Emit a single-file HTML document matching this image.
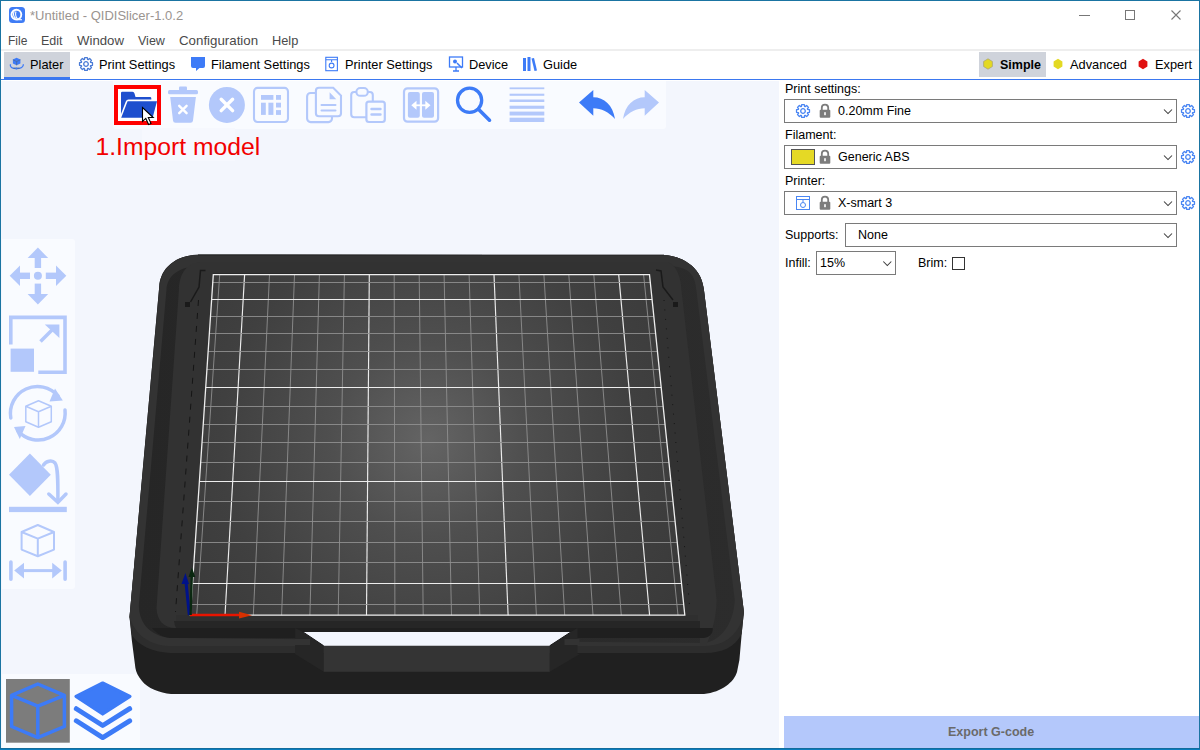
<!DOCTYPE html>
<html><head><meta charset="utf-8">
<style>
*{box-sizing:border-box}
html,body{margin:0;padding:0}
body{width:1200px;height:750px;position:relative;overflow:hidden;background:#fff;font-family:"Liberation Sans",sans-serif;font-size:12.5px;color:#000}
.a{position:absolute;white-space:nowrap}
.t{position:absolute;white-space:nowrap;line-height:1}
.combo{position:absolute;border:1px solid #7a7a7a;background:#fff}
.mn{stroke:#8e8e8e;stroke-width:0.9}
.mj{stroke:#ededed;stroke-width:1.15}
</style></head><body>
<!-- title bar -->
<div class="a" style="left:9px;top:7px;width:16px;height:16px;background:#3f7cf5;border-radius:3.5px"></div>
<svg class="a" style="left:9px;top:7px" width="16" height="16" viewBox="0 0 16 16"><circle cx="7.4" cy="7.6" r="4.9" fill="none" stroke="#fff" stroke-width="1.9"/><path d="M5.3,4.2 Q3.2,8 6.5,11.5 M7,4.5 Q5.6,8.5 8.5,12" stroke="#fff" stroke-width="1.1" fill="none"/><path d="M8,12.6 L13,12.8" stroke="#fff" stroke-width="1.1"/></svg>
<div class="t" style="left:30px;top:9px;color:#9a9490;font-size:13px">*Untitled - QIDISlicer-1.0.2</div>
<div class="a" style="left:1079px;top:15px;width:11px;height:1px;background:#777"></div>
<div class="a" style="left:1125px;top:10px;width:10px;height:10px;border:1px solid #777"></div>
<svg class="a" style="left:1171px;top:10px" width="10" height="10" viewBox="0 0 10 10"><path d="M0.5 0.5L9.5 9.5M9.5 0.5L0.5 9.5" stroke="#777" stroke-width="1.1"/></svg>
<!-- menu -->
<div class="t" style="left:8px;top:35px;color:#4a4a4a;font-size:12px">File</div>
<div class="t" style="left:41px;top:35px;color:#4a4a4a">Edit</div>
<div class="t" style="left:77px;top:34.4px;color:#4a4a4a;font-size:13.2px">Window</div>
<div class="t" style="left:138px;top:35px;color:#4a4a4a">View</div>
<div class="t" style="left:179px;top:34.4px;color:#4a4a4a;font-size:13.3px">Configuration</div>
<div class="t" style="left:272px;top:35px;color:#4a4a4a;font-size:12.8px">Help</div>
<div class="a" style="left:1px;top:49px;width:1198px;height:2px;background:#eeeeee"></div>
<!-- tabs -->
<div class="a" style="left:4px;top:52px;width:66px;height:25px;background:#cfd3db"></div>
<div class="a" style="left:4px;top:77px;width:66px;height:3px;background:#3b78f0"></div>
<div class="a" style="left:1px;top:79px;width:1198px;height:1px;background:#3b78f0"></div>
<div class="t" style="left:30px;top:59px;font-size:12.8px">Plater</div>
<div class="t" style="left:99px;top:59px;font-size:12.8px">Print Settings</div>
<div class="t" style="left:211px;top:59px;font-size:12.8px">Filament Settings</div>
<div class="t" style="left:345px;top:59px;font-size:12.8px">Printer Settings</div>
<div class="t" style="left:469px;top:59px;font-size:12.8px">Device</div>
<div class="t" style="left:543px;top:59px;font-size:12.8px">Guide</div>
<div class="a" style="left:979px;top:52px;width:67px;height:25px;background:#cfd3db"></div>
<div class="t" style="left:1000px;top:59px;font-size:12.5px;font-weight:bold">Simple</div>
<div class="t" style="left:1070px;top:59px;font-size:12.8px">Advanced</div>
<div class="t" style="left:1155px;top:59px;font-size:12.8px">Expert</div>
<svg class="a" style="left:0;top:0" width="1200" height="80" viewBox="0 0 1200 80">
 <!-- hexagons -->
 <polygon points="988,58.8 992.4,61.5 992.4,66.5 988,69.2 983.6,66.5 983.6,61.5" fill="#e3d923" stroke="#a8a070" stroke-width="0.7"/>
 <polygon points="1058,58.8 1062.4,61.5 1062.4,66.5 1058,69.2 1053.6,66.5 1053.6,61.5" fill="#e3d923"/>
 <polygon points="1143,58.8 1147.4,61.5 1147.4,66.5 1143,69.2 1138.6,66.5 1138.6,61.5" fill="#e01010"/>
</svg>
<!-- canvas -->
<div class="a" style="left:1px;top:81px;width:778px;height:667px;background:#f3f6fd"></div>
<svg class="a" style="left:0;top:0" width="1200" height="750" viewBox="0 0 1200 750">
 <defs>
  <radialGradient id="plate" cx="428" cy="440" r="320" gradientUnits="userSpaceOnUse">
   <stop offset="0" stop-color="#646464"/><stop offset="0.3" stop-color="#4f4f4f"/><stop offset="0.65" stop-color="#404040"/><stop offset="1" stop-color="#383838"/>
  </radialGradient>
  <linearGradient id="dband" x1="130" y1="0" x2="745" y2="0" gradientUnits="userSpaceOnUse"><stop offset="0" stop-color="#262626"/><stop offset="1" stop-color="#2c2c2c"/></linearGradient>
 </defs>
 <!-- toolbar bgs -->
 <path d="M113,81 H666 V126 Q666,129 663,129 H116 Q113,129 113,126 Z" fill="#f9fbff"/>
 <path d="M2,239 H72 Q75,239 75,242 V586 Q75,589 72,589 H2 Z" fill="#f9fbff"/>
 <path d="M2,674 H137 Q140,674 140,677 V748 H2 Z" fill="#f9fbff"/>
 <rect x="142" y="128" width="93" height="33" fill="#f6f8fe"/>
 <!-- bed body -->
 <path d="M198.2,254.7 L663.7,255 C680,256 701,265 703.8,289 L743.9,612 L741.6,635 L739.4,660 L737,672 C734,682 722,692 704,694 L171,694 C160,693 147,688 142,681 C138,676 136,672 135.4,668 L131.8,640 L129.5,617 L159.2,287.2 C160,268 176,255 198.2,254.7 Z" fill="#202020"/>
 <path d="M198.2,254.7 L663.7,255 C680,256 701,265 703.8,289 L743.9,612 L741.6,634 C735,647 722,653 705,653 L170,653 C152,652 138,645 131.8,635 L129.5,617 L159.2,287.2 C160,268 176,255 198.2,254.7 Z" fill="#2d2d2d"/>
 <path d="M198.2,254.7 L663.7,255 C680,256 701,265 703.8,289 L743.9,612 C741,632 726,646 705,646 L168,646 C150,645 135,635 129.5,617 L157,320 L160,285 C163,265 178,256 198,255 Z" fill="#333333"/>
 <path d="M200,266 L672,266 C690,268 695,275 696.4,290 L734.8,600 C734,622 722,641 704,643 L175,638 C152,638 139,625 138.8,605 L166.4,290 C167,275 180,266 200,266 Z" fill="url(#dband)"/>
 <path d="M200,262 L668,262 C678,266 681,280 681.5,290 L716.7,600 C716,620 712,632 706,646 L700,646 L700,628 L176,628 C163,628 157,620 156.5,608 L178.9,290 C179,275 186,263 200,262 Z" fill="#323232"/>
 <rect x="176" y="615" width="522" height="6" fill="#2f2f2f"/>
 <path d="M174,621 H700 V628 H176 C175,626 174.5,624 174,621 Z" fill="#262626"/>
 <path d="M152,628 H712.7 V630 C712.3,634 709,638 703,638 H170 C162,637 156,633 152,628 Z" fill="#1f1f1f"/>
 <rect x="198" y="254.6" width="466" height="1" fill="#262626"/>
 <rect x="213" y="273.2" width="437" height="1" fill="#2a2a2a"/>
 <!-- notch -->
 <polygon points="295.1,628 302.9,631.9 323.7,645.8 323.7,671.8 295.1,654" fill="#262626"/>
 <polygon points="577.5,628 571,631.9 549.7,645.8 549.7,671.8 580,654 577.5,654" fill="#262626"/>
 <rect x="295" y="639" width="15" height="6" fill="#333"/>
 <rect x="564.5" y="639" width="15" height="6" fill="#333"/>
 <rect x="323.7" y="645.8" width="226" height="26" fill="#343434"/>
 <polygon points="302.9,631.9 571,631.9 549.7,645.8 323.7,645.8" fill="#f3f6fd"/>
 <path d="M302.9,631.9 L323.7,645.8 M571,631.9 L549.7,645.8" stroke="#151515" stroke-width="1"/>
 <!-- plate -->
 <polygon points="213.3,274.6 649.5,274.6 684.8,615.2 190.4,615.2" fill="url(#plate)"/>
 <line x1="219.7" y1="274.6" x2="196.7" y2="615.2" class="mn"/>
<line x1="244.6" y1="274.6" x2="225.0" y2="615.2" class="mj"/>
<line x1="269.5" y1="274.6" x2="253.3" y2="615.2" class="mn"/>
<line x1="294.5" y1="274.6" x2="281.6" y2="615.2" class="mn"/>
<line x1="319.4" y1="274.6" x2="309.9" y2="615.2" class="mn"/>
<line x1="344.4" y1="274.6" x2="338.2" y2="615.2" class="mn"/>
<line x1="369.3" y1="274.6" x2="366.5" y2="615.2" class="mj"/>
<line x1="394.2" y1="274.6" x2="394.9" y2="615.2" class="mn"/>
<line x1="419.2" y1="274.6" x2="423.2" y2="615.2" class="mn"/>
<line x1="444.1" y1="274.6" x2="451.5" y2="615.2" class="mn"/>
<line x1="469.1" y1="274.6" x2="479.8" y2="615.2" class="mn"/>
<line x1="494.0" y1="274.6" x2="508.1" y2="615.2" class="mj"/>
<line x1="518.9" y1="274.6" x2="536.4" y2="615.2" class="mn"/>
<line x1="543.9" y1="274.6" x2="564.7" y2="615.2" class="mn"/>
<line x1="568.8" y1="274.6" x2="593.0" y2="615.2" class="mn"/>
<line x1="593.8" y1="274.6" x2="621.3" y2="615.2" class="mn"/>
<line x1="618.7" y1="274.6" x2="649.6" y2="615.2" class="mj"/>
<line x1="643.6" y1="274.6" x2="678.0" y2="615.2" class="mn"/>
<line x1="212.8" y1="282.5" x2="650.3" y2="282.5" class="mn"/>
<line x1="211.6" y1="299.5" x2="652.1" y2="299.5" class="mj"/>
<line x1="210.5" y1="316.5" x2="653.8" y2="316.5" class="mn"/>
<line x1="209.3" y1="333.5" x2="655.6" y2="333.5" class="mn"/>
<line x1="208.1" y1="351.5" x2="657.5" y2="351.5" class="mn"/>
<line x1="206.9" y1="369.5" x2="659.3" y2="369.5" class="mn"/>
<line x1="205.7" y1="387.5" x2="661.2" y2="387.5" class="mj"/>
<line x1="204.4" y1="406.5" x2="663.1" y2="406.5" class="mn"/>
<line x1="203.2" y1="424.5" x2="665.0" y2="424.5" class="mn"/>
<line x1="202.0" y1="442.5" x2="666.9" y2="442.5" class="mn"/>
<line x1="200.7" y1="462.5" x2="669.0" y2="462.5" class="mn"/>
<line x1="199.4" y1="481.5" x2="671.0" y2="481.5" class="mj"/>
<line x1="198.0" y1="501.5" x2="673.0" y2="501.5" class="mn"/>
<line x1="196.7" y1="521.5" x2="675.1" y2="521.5" class="mn"/>
<line x1="195.3" y1="542.5" x2="677.2" y2="542.5" class="mn"/>
<line x1="194.0" y1="562.5" x2="679.3" y2="562.5" class="mn"/>
<line x1="192.5" y1="583.5" x2="681.5" y2="583.5" class="mj"/>
<line x1="191.1" y1="604.5" x2="683.7" y2="604.5" class="mn"/>
<polygon points="213.3,274.6 649.5,274.6 684.8,615.2 190.4,615.2" fill="none" stroke="#eeeeee" stroke-width="1.3"/>

 <!-- dashed -->
 <line x1="198.5" y1="300" x2="175.5" y2="612" stroke="#151515" stroke-width="1" stroke-dasharray="6 7"/>
 <line x1="664" y1="300" x2="690" y2="612" stroke="#151515" stroke-width="1" stroke-dasharray="1 8.5"/>
 <path d="M205.5,270.5 L200.5,270.5 L199,287 L190.5,302" fill="none" stroke="#1a1a1a" stroke-width="1.5"/>
 <rect x="185" y="302" width="5" height="5" fill="#1a1a1a"/>
 <path d="M656,270 L661,271 L663,287 L673,300" fill="none" stroke="#1a1a1a" stroke-width="1.5"/>
 <rect x="673" y="302" width="5" height="5" fill="#1a1a1a"/>
 <!-- axes -->
 <line x1="190" y1="615" x2="241" y2="615" stroke="#e81400" stroke-width="2.6"/>
 <polygon points="239,611.8 252,615.2 239,618.6" fill="#d83000"/>
 <line x1="189.3" y1="615" x2="186" y2="582" stroke="#00128a" stroke-width="3"/>
 <polygon points="181.5,584 185.4,573 189,584" fill="#00128a"/>
 <line x1="190.6" y1="615" x2="191.8" y2="576" stroke="#0a2810" stroke-width="2.4"/>
 <polygon points="188.5,577 191.9,567.5 195.3,577" fill="#0a2810"/>
</svg>
<!-- icons -->
<svg class="a" style="left:0;top:0" width="1200" height="750" viewBox="0 0 1200 750">
 <!-- import: red box -->
 <rect x="116" y="87" width="43" height="36" fill="#fff" stroke="#ff0000" stroke-width="4"/>
 <path d="M121,93 Q121,91.7 122.3,91.7 H132.5 Q134,91.7 134.5,93.5 L135.5,97 H150 Q151.3,97 151.3,98.3 V99.6 H128.5 Q126.5,99.6 125.8,101.5 L121,114 Z" fill="#1e4fce"/>
 <path d="M127.6,101.2 H157 L152.6,117.8 H121.2 Z" fill="#1e4fce"/>
 <!-- cursor -->
 <path d="M142.5,107.5 V121.5 L145.8,118.4 L148.6,124.6 L151,123.5 L148.3,117.5 H153.2 Z" fill="#fff" stroke="#000" stroke-width="1.1" stroke-linejoin="miter"/>
 <!-- trash -->
 <g fill="#b3c8fb">
  <rect x="179" y="86.5" width="8" height="4" rx="1"/>
  <rect x="168" y="90" width="30" height="4.2" rx="1.5"/>
  <path d="M170.2,97 H195.9 L193,120.5 Q192.8,122.7 190.5,122.7 H175.5 Q173.2,122.7 173,120.5 Z"/>
 </g>
 <path d="M179.2,105.8 L186.6,113.2 M186.6,105.8 L179.2,113.2" stroke="#fff" stroke-width="2.4" stroke-linecap="round"/>
 <!-- x circle -->
 <circle cx="226.9" cy="104.9" r="18" fill="#b3c8fb"/>
 <path d="M221.2,99.2 L232.6,110.6 M232.6,99.2 L221.2,110.6" stroke="#fff" stroke-width="3.4" stroke-linecap="round"/>
 <!-- arrange -->
 <rect x="254" y="87.9" width="34" height="34.1" rx="3.5" fill="none" stroke="#b3c8fb" stroke-width="2.1"/>
 <g fill="#b3c8fb">
  <rect x="261" y="95" width="12.4" height="4.8"/>
  <rect x="276" y="95" width="5" height="4.8"/>
  <rect x="261" y="102.7" width="4.8" height="12.2"/>
  <rect x="268.4" y="102.7" width="5" height="12.2"/>
  <rect x="276" y="102.7" width="5" height="4.8"/>
  <rect x="276" y="110.1" width="5" height="4.8"/>
 </g>
 <!-- copy -->
 <rect x="307.1" y="93" width="24.9" height="29.1" rx="3.5" fill="none" stroke="#b3c8fb" stroke-width="2.1"/>
 <path d="M318.9,87.8 H333.2 L341,95.6 V113.3 Q341,116.3 338,116.3 H318.9 Q315.9,116.3 315.9,113.3 V90.8 Q315.9,87.8 318.9,87.8 Z" fill="#f9fbff" stroke="#b3c8fb" stroke-width="2.1"/>
 <path d="M329.6,92.3 V99.3 H336.3 Z" fill="#b3c8fb"/>
 <path d="M321.5,105 H335.5 M321.5,110.5 H335.5" stroke="#b3c8fb" stroke-width="2" stroke-linecap="round"/>
 <!-- paste -->
 <rect x="351.2" y="92" width="21.6" height="25.3" rx="3" fill="none" stroke="#b3c8fb" stroke-width="2.1"/>
 <rect x="356.4" y="88" width="11.4" height="7.8" rx="3.9" fill="#f9fbff" stroke="#b3c8fb" stroke-width="2.1"/>
 <rect x="366.4" y="101.6" width="18.4" height="20.4" rx="2.5" fill="#f9fbff" stroke="#b3c8fb" stroke-width="2.2"/>
 <path d="M371.5,109 H380.5 M371.5,114.5 H380.5" stroke="#b3c8fb" stroke-width="2.4" stroke-linecap="round"/>
 <!-- split -->
 <rect x="404" y="88.3" width="34.1" height="33.4" rx="3.5" fill="none" stroke="#b3c8fb" stroke-width="2.2"/>
 <rect x="407.9" y="92" width="11.9" height="25.8" rx="2" fill="#b3c8fb"/>
 <rect x="422" y="92" width="12" height="25.8" rx="2" fill="#b3c8fb"/>
 <path d="M415,105.3 H427.5" stroke="#fff" stroke-width="1.8"/>
 <polygon points="411.3,105.3 416.5,100.8 416.5,109.8" fill="#fff"/>
 <polygon points="430.5,105.3 425.3,100.8 425.3,109.8" fill="#fff"/>
 <!-- search -->
 <circle cx="469.6" cy="100.3" r="12.1" fill="none" stroke="#3d7bf7" stroke-width="3.3"/>
 <path d="M478.5,109.2 L489.5,120.2" stroke="#3d7bf7" stroke-width="3.6" stroke-linecap="round"/>
 <!-- layers lines -->
 <g fill="#b3c8fb">
  <rect x="509.6" y="87.4" width="34.7" height="1.8"/>
  <rect x="509.6" y="93.7" width="34.7" height="2.1"/>
  <rect x="509.6" y="99.5" width="34.7" height="2.5"/>
  <rect x="509.6" y="105.7" width="34.7" height="3.1"/>
  <rect x="509.6" y="111.6" width="34.7" height="3.9"/>
  <rect x="509.6" y="117.7" width="34.7" height="4.3"/>
 </g>
 <!-- undo / redo -->
 <path d="M579,102.4 L593.3,89.9 V97.2 C604,97.2 613,105 615,119.1 C609,112 601,108.25 593.3,108.25 V115.75 Z" fill="#3d7bf7"/>
 <path d="M659,102.4 L644.7,89.9 V97.2 C634,97.2 625,105 623,119.1 C629,112 637,108.25 644.7,108.25 V115.75 Z" fill="#b3c8fb"/>

 <!-- left toolbar: move -->
 <g fill="#b3c8fb">
  <polygon points="37.9,247.5 48.2,258.1 27.6,258.1"/>
  <polygon points="37.9,304.4 48.2,294.1 27.6,294.1"/>
  <polygon points="9.7,275.8 20,265.6 20,286.1"/>
  <polygon points="66.3,275.8 56,265.6 56,286.1"/>
  <rect x="34.7" y="257" width="6.4" height="11"/>
  <rect x="34.7" y="283.6" width="6.4" height="11"/>
  <rect x="19" y="272.6" width="11" height="6.4"/>
  <rect x="45.8" y="272.6" width="11" height="6.4"/>
  <circle cx="37.9" cy="275.8" r="4"/>
 </g>
 <!-- scale -->
 <path d="M10.8,344.5 V317.4 H65 V372.2 H38.3" fill="none" stroke="#b3c8fb" stroke-width="3.6"/>
 <rect x="10.6" y="348.6" width="23.4" height="23.2" fill="#b3c8fb"/>
 <path d="M40.5,341.5 L53,329" stroke="#b3c8fb" stroke-width="3.6"/>
 <polygon points="44.8,324.4 59.4,324.4 59.4,338" fill="#b3c8fb"/>
 <!-- rotate -->
 <path d="M10.8,418 A27,27 0 0 1 58,396" fill="none" stroke="#b3c8fb" stroke-width="3.5" stroke-linecap="round"/>
 <polygon points="55,388.5 62.8,400.5 49.5,401.5" fill="#b3c8fb"/>
 <path d="M65,410 A27,27 0 0 1 18,431" fill="none" stroke="#b3c8fb" stroke-width="3.5" stroke-linecap="round"/>
 <polygon points="14,427 25.5,426 19.8,439" fill="#b3c8fb"/>
 <path d="M38.5,400.8 L51.3,406.3 V421.7 L38.5,427.3 L25.8,421.7 V406.3 Z M25.8,406.3 L38.5,411.8 L51.3,406.3 M38.5,411.8 V427.3" fill="none" stroke="#b3c8fb" stroke-width="1.5" stroke-linejoin="round"/>
 <!-- place on face -->
 <polygon points="9,474.7 29.9,453.6 50.8,474.7 29.9,496" fill="#b3c8fb"/>
 <path d="M43.5,465 C46,461 52,459.5 55,463 C58,467 58,480 57.9,500" fill="none" stroke="#b3c8fb" stroke-width="3.5" stroke-linecap="round"/>
 <path d="M48.8,494 L57.9,502.4 L66,494" fill="none" stroke="#b3c8fb" stroke-width="3.5" stroke-linecap="round"/>
 <rect x="9" y="506.8" width="57.8" height="5.3" fill="#b3c8fb"/>
 <!-- measure -->
 <path d="M37.8,525 L54,532 V549.6 L37.8,556.2 L21.6,549.6 V532 Z M21.6,532 L37.8,538.6 L54,532 M37.8,538.6 V556.2" fill="none" stroke="#b3c8fb" stroke-width="2" stroke-linejoin="round"/>
 <path d="M10.9,562 V579.3 M65.1,562 V579.3" stroke="#b3c8fb" stroke-width="3.6" stroke-linecap="round"/>
 <path d="M22,570.6 H54" stroke="#b3c8fb" stroke-width="3"/>
 <polygon points="14.2,570.6 24,562.8 24,578.6" fill="#b3c8fb"/>
 <polygon points="61.8,570.6 52.2,562.8 52.2,578.6" fill="#b3c8fb"/>

 <!-- bottom view toolbar -->
 <rect x="6" y="679" width="63.8" height="63.7" fill="#7c7c7c"/>
 <path d="M37.8,684 L64.4,695.3 V726.5 L37.8,737.6 L11.6,726.5 V695.3 Z M11.6,695.3 L37.8,706.2 L64.4,695.3 M37.8,706.2 V737.6" fill="none" stroke="#3d7bf7" stroke-width="3.5" stroke-linejoin="round"/>
 <path d="M76,696.4 L102.7,683 L130,696.4 L102.7,714 Z" fill="#3d7bf7" stroke="#3d7bf7" stroke-width="3.2" stroke-linejoin="round"/>
 <path d="M76.3,708.7 L102.7,725.5 L129.7,708.7" fill="none" stroke="#3d7bf7" stroke-width="4.9" stroke-linecap="round" stroke-linejoin="round"/>
 <path d="M76.3,720.8 L102.7,737.6 L129.7,720.8" fill="none" stroke="#3d7bf7" stroke-width="4.9" stroke-linecap="round" stroke-linejoin="round"/>

 <!-- tab icons -->
 <!-- plater icon -->
 <path d="M16.6,57.7 L20.4,59.6 V63.4 L16.6,65.3 L12.9,63.4 V59.6 Z" fill="#3d7bf7"/>
 <path d="M12.9,59.8 L16.6,61.5 L20.4,59.8 M16.6,61.5 V65.3" stroke="#4a6a9a" stroke-width="0.8" fill="none"/>
 <path d="M10.5,64.3 C9.5,67 12,68.6 16.5,68.6 C21,68.6 23.5,67 23.4,64.3" fill="none" stroke="#3d7bf7" stroke-width="1.3"/>
 <path d="M13.5,68.2 H19.5" stroke="#4a6a9a" stroke-width="1"/>
 <circle cx="16.4" cy="68.6" r="1" fill="#3d7bf7"/>
 <!-- print settings gear -->
 <use href="#gear2" x="86" y="64"/>
 <!-- filament icon -->
 <path d="M191,57 H205 V66 Q205,68 203,68 H199.5 L196,71 V68 H193 Q191,68 191,66 Z" fill="#3d7bf7"/>
 <!-- printer icon -->
 <rect x="325.8" y="57.3" width="11.6" height="13.4" fill="none" stroke="#3d7bf7" stroke-width="1.1"/>
 <path d="M325.8,59.8 H337.4 M331.6,59.8 V62" stroke="#3d7bf7" stroke-width="1.1"/>
 <circle cx="331.6" cy="65.5" r="2.4" fill="none" stroke="#3d7bf7" stroke-width="1.1"/>
 <!-- device icon -->
 <rect x="449.5" y="57" width="13" height="10" fill="none" stroke="#3d7bf7" stroke-width="1.3"/>
 <path d="M453,71 H459 M456,67 V71" stroke="#3d7bf7" stroke-width="1.3"/>
 <circle cx="455" cy="61.5" r="2" fill="#3d7bf7"/>
 <path d="M457,63 L462,68" stroke="#3d7bf7" stroke-width="1.5"/>
 <!-- guide icon -->
 <rect x="523" y="58" width="3" height="13" fill="#3d7bf7"/>
 <rect x="527.5" y="57" width="3" height="14" fill="#3d7bf7"/>
 <path d="M531.5,58.5 L534,58 L537,70.5 L534.5,71 Z" fill="#3d7bf7"/>
 <defs>
  <g id="gear2"><path d="M-1.54,-4.65 L-1.31,-6.47 L1.31,-6.47 L1.54,-4.65 L2.20,-4.38 L3.65,-5.50 L5.50,-3.65 L4.38,-2.20 L4.65,-1.54 L6.47,-1.31 L6.47,1.31 L4.65,1.54 L4.38,2.20 L5.50,3.65 L3.65,5.50 L2.20,4.38 L1.54,4.65 L1.31,6.47 L-1.31,6.47 L-1.54,4.65 L-2.20,4.38 L-3.65,5.50 L-5.50,3.65 L-4.38,2.20 L-4.65,1.54 L-6.47,1.31 L-6.47,-1.31 L-4.65,-1.54 L-4.38,-2.20 L-5.50,-3.65 L-3.65,-5.50 L-2.20,-4.38 Z" fill="none" stroke="#4a7bd6" stroke-width="1.3" stroke-linejoin="round"/><circle r="2.3" fill="none" stroke="#4a7bd6" stroke-width="1.3"/></g>
 </defs>
</svg>
<div class="t" style="left:95.5px;top:134.5px;color:#f20000;font-size:24.7px">1.Import model</div>
<!-- right panel -->
<div class="t" style="left:785px;top:83px">Print settings:</div>
<div class="combo" style="left:784px;top:99px;width:393px;height:24px"></div>
<div class="t" style="left:838px;top:105px">0.20mm Fine</div>
<div class="t" style="left:785px;top:129px">Filament:</div>
<div class="combo" style="left:784px;top:145px;width:393px;height:24px"></div>
<div class="a" style="left:791px;top:149px;width:24px;height:16px;background:#e5d925;border:1px solid #555"></div>
<div class="t" style="left:838px;top:151px">Generic ABS</div>
<div class="t" style="left:785px;top:175px">Printer:</div>
<div class="combo" style="left:784px;top:191px;width:393px;height:24px"></div>
<div class="t" style="left:838px;top:197px">X-smart 3</div>
<div class="t" style="left:785px;top:229px">Supports:</div>
<div class="combo" style="left:845px;top:223px;width:332px;height:24px"></div>
<div class="t" style="left:858px;top:229px">None</div>
<div class="t" style="left:785px;top:257px">Infill:</div>
<div class="combo" style="left:816px;top:251px;width:80px;height:24px"></div>
<div class="t" style="left:820px;top:257px">15%</div>
<div class="t" style="left:918px;top:257px">Brim:</div>
<div class="a" style="left:952px;top:257px;width:13px;height:13px;border:1px solid #333;background:#fff"></div>
<div class="a" style="left:784px;top:716px;width:415px;height:32px;background:#b4c8fb"></div>
<div class="t" style="left:948px;top:726px;font-weight:bold;color:#6a6a6a">Export G-code</div>
<svg class="a" style="left:0;top:0" width="1200" height="750" viewBox="0 0 1200 750">
 <defs>
  <g id="gear"><path d="M-1.54,-4.65 L-1.31,-6.47 L1.31,-6.47 L1.54,-4.65 L2.20,-4.38 L3.65,-5.50 L5.50,-3.65 L4.38,-2.20 L4.65,-1.54 L6.47,-1.31 L6.47,1.31 L4.65,1.54 L4.38,2.20 L5.50,3.65 L3.65,5.50 L2.20,4.38 L1.54,4.65 L1.31,6.47 L-1.31,6.47 L-1.54,4.65 L-2.20,4.38 L-3.65,5.50 L-5.50,3.65 L-4.38,2.20 L-4.65,1.54 L-6.47,1.31 L-6.47,-1.31 L-4.65,-1.54 L-4.38,-2.20 L-5.50,-3.65 L-3.65,-5.50 L-2.20,-4.38 Z" fill="none" stroke="#4a86f3" stroke-width="1.3" stroke-linejoin="round"/><circle r="2.3" fill="none" stroke="#4a86f3" stroke-width="1.3"/></g>
  <g id="lock"><path d="M-3.2,-1 V-3.2 A3.2,3.2 0 0 1 3.2,-3.2 V-1" fill="none" stroke="#7c7c7c" stroke-width="1.8"/><rect x="-5.3" y="-1.2" width="10.6" height="8" rx="1" fill="#7c7c7c"/><rect x="-0.8" y="1.2" width="1.6" height="3" fill="#fff"/></g>
  <path id="chev" d="M0,0 L4,4 L8,0" fill="none" stroke="#3a3a3a" stroke-width="1.05"/>
 </defs>
 <use href="#gear" x="803" y="111"/>
 <use href="#lock" x="825" y="111"/>
 <use href="#gear" x="1188" y="111"/>
 <use href="#chev" x="1164" y="109.5"/>
 <use href="#lock" x="825" y="157"/>
 <use href="#gear" x="1188" y="157"/>
 <use href="#chev" x="1164" y="155.5"/>
 <rect x="796.5" y="196.5" width="13" height="13" fill="none" stroke="#4a86f3" stroke-width="1"/>
 <path d="M796.5,199.5 H809.5 M803,199.5 V202" stroke="#4a86f3" stroke-width="1"/>
 <circle cx="803" cy="205" r="2.5" fill="none" stroke="#4a86f3" stroke-width="1"/>
 <use href="#lock" x="825" y="203"/>
 <use href="#gear" x="1188" y="203"/>
 <use href="#chev" x="1164" y="201.5"/>
 <use href="#chev" x="1164" y="233.5"/>
 <use href="#chev" x="883.3" y="261.5"/>
</svg>
<!-- window border -->
<div class="a" style="left:0;top:0;width:1200px;height:750px;border:1px solid #1a74a2;border-bottom:none"></div>
<div class="a" style="left:0;top:748px;width:1200px;height:1px;background:#136c9c"></div>
<div class="a" style="left:0;top:749px;width:1200px;height:1px;background:#0a7cbd"></div>
</body></html>
